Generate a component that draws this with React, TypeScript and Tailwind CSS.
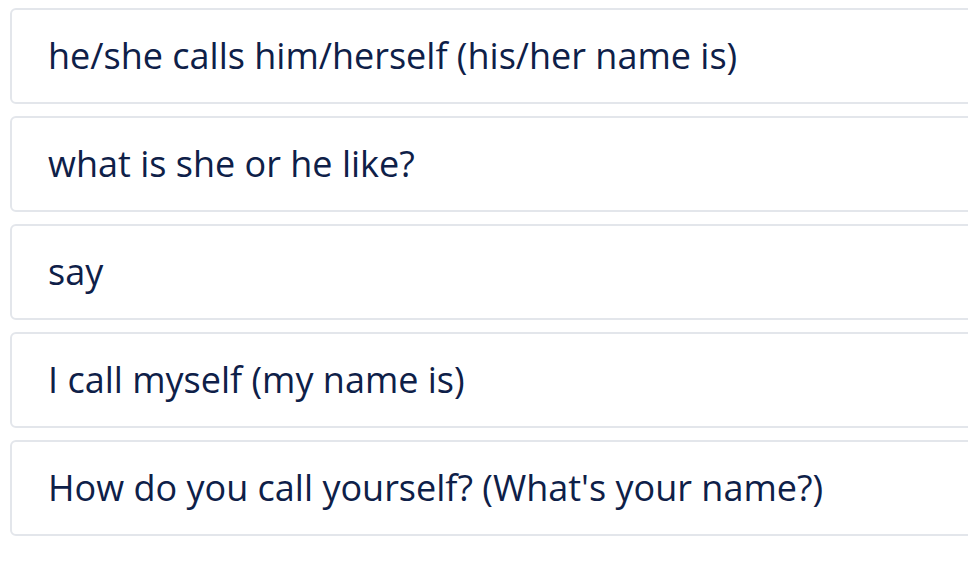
const phrases = [
  'he/she calls him/herself (his/her name is)',
  'what is she or he like?',
  'say',
  'I call myself (my name is)',
  "How do you call yourself? (What's your name?)",
];

export default function App() {
  return (
    <div className="w-[968px] h-[562px] overflow-hidden bg-white pt-2 pl-[10px]">
      <div className="flex flex-col gap-3 w-[1000px]">
        {phrases.map((text) => (
          <div
            key={text}
            className="h-[96px] flex items-center border-2 border-[#e3e6eb] rounded-md bg-white pl-[36px]"
          >
            <span
              className="text-[36px] leading-none text-[#0e2048]"
              style={{ fontFamily: '"Open Sans", "Noto Sans", sans-serif' }}
            >
              {text}
            </span>
          </div>
        ))}
      </div>
    </div>
  );
}
